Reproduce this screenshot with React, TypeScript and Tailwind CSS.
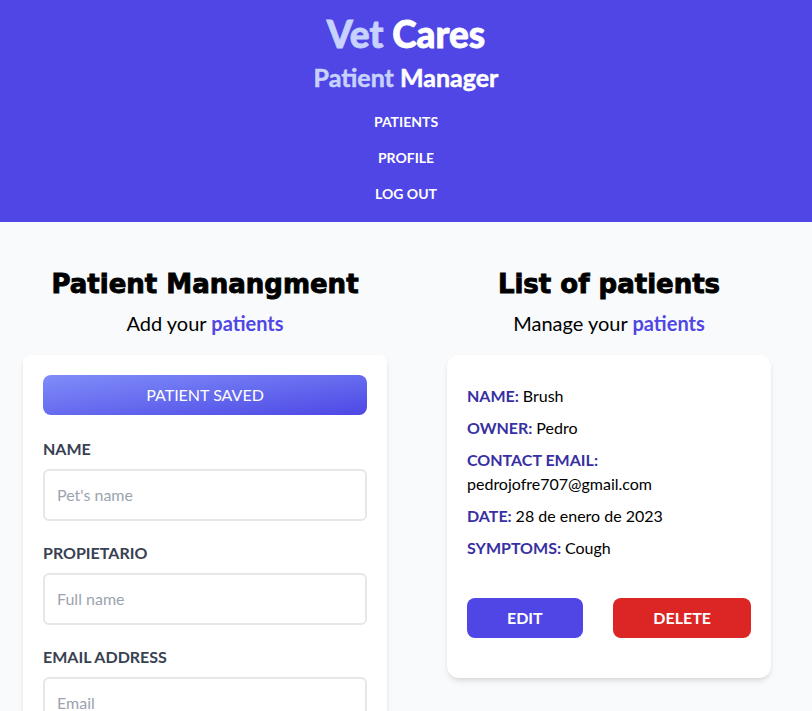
import React from "react";

export default function App() {
  return (
    <div className="min-h-screen bg-[#f9fafb] font-['Lato','Noto_Sans',sans-serif]">
      <header className="bg-[#4f46e5] pt-3 pb-[16px] text-center">
        <h1 className="text-[37px] leading-[44px] font-black text-[#c7d2fe] [-webkit-text-stroke:0.8px]">
          Vet <span className="text-white">Cares</span>
        </h1>
        <h2 className="mt-[5px] text-[25px] leading-[32px] font-bold text-[#c7d2fe] [-webkit-text-stroke:0.5px]">
          Patient <span className="text-white">Manager</span>
        </h2>
        <nav className="mt-[17px] flex flex-col items-center gap-3 text-sm font-bold uppercase text-white">
          <a className="leading-6">Patients</a>
          <a className="leading-6">Profile</a>
          <a className="leading-6">Log out</a>
        </nav>
      </header>

      <main className="flex pt-[44px]">
        <section className="w-1/2 pl-[23px] pr-[19px]">
          <h2 className="text-center font-['DejaVu_Sans',sans-serif] text-[26px] leading-9 font-bold text-black [-webkit-text-stroke:0.9px]">
            Patient Manangment
          </h2>
          <p className="mt-[7px] text-center text-xl leading-7 text-black">
            Add your <span className="font-bold text-[#4f46e5]">patients</span>
          </p>
          <form className="mt-[18px] rounded-lg bg-white px-5 pt-5 shadow-md">
            <div className="rounded-lg bg-gradient-to-br from-[#818cf8] to-[#4f46e5] py-2 text-center uppercase leading-6 text-white">
              Patient saved
            </div>
            <div className="mt-[22px] mb-5">
              <label className="block font-bold uppercase leading-6 text-[#374151]">Name</label>
              <input
                className="mt-2 w-full rounded-md border-2 border-[#e5e7eb] p-3 leading-6 placeholder:text-[#9ca3af]"
                placeholder="Pet's name"
              />
            </div>
            <div className="mb-5">
              <label className="block font-bold uppercase leading-6 text-[#374151]">Propietario</label>
              <input
                className="mt-2 w-full rounded-md border-2 border-[#e5e7eb] p-3 leading-6 placeholder:text-[#9ca3af]"
                placeholder="Full name"
              />
            </div>
            <div className="mb-5">
              <label className="block font-bold uppercase leading-6 text-[#374151]">Email address</label>
              <input
                className="mt-2 w-full rounded-md border-2 border-[#e5e7eb] p-3 leading-6 placeholder:text-[#9ca3af]"
                placeholder="Email"
              />
            </div>
          </form>
        </section>

        <section className="w-1/2 px-[41px]">
          <h2 className="text-center font-['DejaVu_Sans',sans-serif] text-[26px] leading-9 font-bold text-black [-webkit-text-stroke:0.9px]">
            List of patients
          </h2>
          <p className="mt-[7px] text-center text-xl leading-7 text-black">
            Manage your <span className="font-bold text-[#4f46e5]">patients</span>
          </p>
          <div className="mt-[18px] rounded-xl bg-white px-5 pt-[29px] pb-[40px] shadow-md">
            <p className="mb-2 leading-6 text-black">
              <span className="font-bold uppercase text-[#3730a3]">Name: </span>Brush
            </p>
            <p className="mb-2 leading-6 text-black">
              <span className="font-bold uppercase text-[#3730a3]">Owner: </span>Pedro
            </p>
            <p className="mb-2 leading-6 text-black">
              <span className="font-bold uppercase text-[#3730a3]">Contact email: </span>pedrojofre707@gmail.com
            </p>
            <p className="mb-2 leading-6 text-black">
              <span className="font-bold uppercase text-[#3730a3]">Date: </span>28 de enero de 2023
            </p>
            <p className="mb-2 leading-6 text-black">
              <span className="font-bold uppercase text-[#3730a3]">Symptoms: </span>Cough
            </p>
            <div className="mt-[38px] flex justify-between">
              <button className="rounded-lg bg-[#4f46e5] px-10 py-2 font-bold uppercase leading-6 text-white">
                Edit
              </button>
              <button className="rounded-lg bg-[#dc2626] px-10 py-2 font-bold uppercase leading-6 text-white">
                Delete
              </button>
            </div>
          </div>
        </section>
      </main>
    </div>
  );
}
